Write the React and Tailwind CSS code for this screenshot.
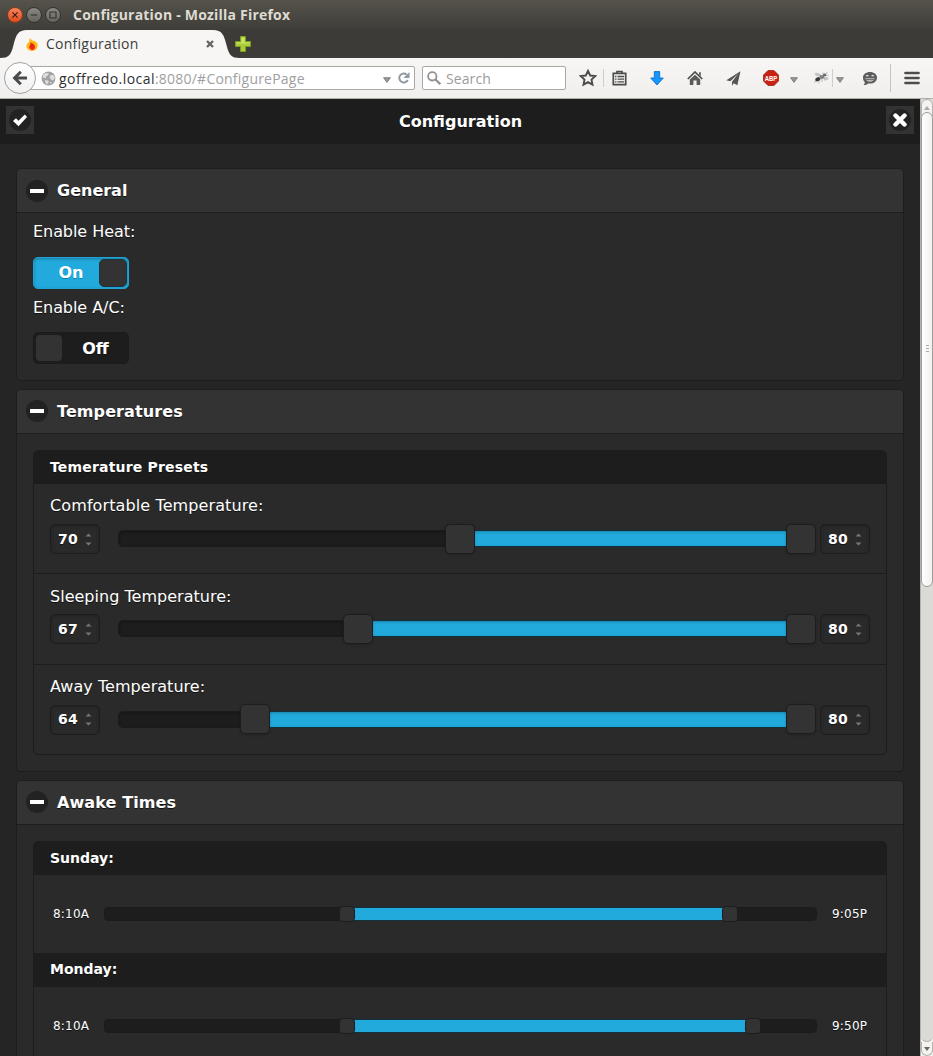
import React from "react";

const UI = "font-['Open_Sans','Noto_Sans',sans-serif]";

function WindowButton({ close, children }) {
  return (
    <span
      className={
        close
          ? "flex size-4 items-center justify-center rounded-full border border-[#8a3a1c] bg-linear-to-b from-[#f4845c] to-[#df4b1a]"
          : "flex size-4 items-center justify-center rounded-full border border-[#33322e] bg-linear-to-b from-[#8a8880] to-[#65635c]"
      }
    >
      <svg width="10" height="10" viewBox="0 0 10 10" fill="none" stroke={close ? "#3d1a0c" : "#33322e"} strokeWidth="1.1">
        {children}
      </svg>
    </span>
  );
}

function TitleBar() {
  return (
    <div className="flex h-[30px] items-center bg-linear-to-b from-[#55534b] to-[#3e3d39] pl-[7px]">
      <div className="flex gap-[3px]">
        <WindowButton close>
          <path d="M2.4 2.4l5.2 5.2M7.6 2.4L2.4 7.6" />
        </WindowButton>
        <WindowButton>
          <path d="M1.8 5h6.4" />
        </WindowButton>
        <WindowButton>
          <path d="M2 2h6v6H2z" />
        </WindowButton>
      </div>
      <span className={`${UI} ml-3 text-[14px] leading-5 font-bold tracking-[0.21px] whitespace-nowrap text-[#dfdbd2]`}>
        Configuration - Mozilla Firefox
      </span>
    </div>
  );
}

function TabBar() {
  return (
    <div className="flex h-7 items-center bg-[#3c3b37]">
      <div className="relative flex h-7 w-[235px] items-center pl-[25px]">
        <svg className="absolute top-0 left-0" width="240" height="28" viewBox="0 0 240 28">
          <path d="M0 28C9 28 11 25 13.500 15C16 5 18 0 27 0H213C222 0 224 5 226.500 15C229 25 231 28 240 28z" fill="#f7f6f5" />
        </svg>
        <svg className="relative" width="14" height="15" viewBox="0 0 14 15">
          <path d="M4.500 1C6.500 2.500 7 4 8.500 3.800C9.600 3.600 10 4.500 11.500 5.500C13.400 7 13 10 11.500 12C9.500 14.500 4.500 14.600 2.500 12C.8 10 1.200 7.500 3 6C4.500 4.800 4.700 3 4.500 1z" fill="#fdb813" />
          <path d="M5.500 5.500C7.500 6 10 7.500 10 10C10 12.500 7.500 13.500 5.800 12.500C4 11.500 3.800 9.500 4.800 8.500C5.600 7.600 5.600 6.600 5.500 5.500z" fill="#ee2415" />
        </svg>
        <span className={`${UI} relative ml-[7px] w-[159px] text-[14px] leading-5 tracking-[0.25px] text-[#3d3d3d]`}>Configuration</span>
        <svg className="relative" width="10" height="10" viewBox="0 0 10 10">
          <path d="M2 2l6 6M8 2L2 8" stroke="#666" strokeWidth="2.400" />
        </svg>
      </div>
      <svg width="16" height="16" viewBox="0 0 16 16">
        <path d="M5.500.500h5v5h5v5h-5v5h-5v-5h-5v-5h5z" fill="#a9cb3c" stroke="#7da01f" />
        <path d="M6.500 1.500h3v5h5v1h-13v-1h5z" fill="#cfe36c" />
      </svg>
    </div>
  );
}

function Triangle({ className }) {
  return (
    <svg className={className} width="8" height="6" viewBox="0 0 8 6">
      <path d="M.6.700h6.800L4 5.400z" fill="#999" stroke="#6d6d6d" strokeWidth=".8" />
    </svg>
  );
}

function Toolbar() {
  return (
    <div className="flex h-[41px] items-center border-b border-[#b1b0a6] bg-linear-to-b from-[#f7f6f5] to-[#f0efed]">
      <div className="relative z-10 ml-1 flex size-8 shrink-0 items-center justify-center rounded-full border border-[#a3a29e] bg-linear-to-b from-white to-[#f1f1f1]">
        <svg width="16" height="16" viewBox="0 0 16 16" fill="none" stroke="#4b4b4b" strokeWidth="3">
          <path d="M8.800 1.800L2.600 8l6.200 6.200M3 8h12" />
        </svg>
      </div>
      <div className="-ml-2 flex h-6 w-[387px] shrink-0 items-center rounded-r-[2px] border border-[#a9a8a3] bg-white pl-[12px]">
        <svg width="15" height="15" viewBox="0 0 15 15">
          <circle cx="7.500" cy="7.500" r="6.900" fill="#a2a2a2" />
          <path d="M2 4l3-2 3 .5-1 2-2 1-.5 2-2.500-1zM9.500 4l3 0 1.500 3-2 2.500-2-1-1.500-2.200zM4 9l3 .5 1 1.500-2 2.500-1.500-1.500zM9 11l2 0-1.500 2z" fill="#dedede" />
        </svg>
        <span className={`${UI} ml-[3px] w-[324px] pt-px text-[14px] leading-5 tracking-[0.22px] whitespace-nowrap text-[#a0a0a0]`}>
          <span className="tracking-[0.45px] text-[#303030]">goffredo.local</span>:8080/#ConfigurePage
        </span>
        <Triangle className="mt-[3px]" />
        <svg className="ml-[6px]" width="14" height="14" viewBox="0 0 14 14" fill="none">
          <path d="M9.800 3.600A4.500 4.500 0 1 0 10.800 9" stroke="#9098a1" strokeWidth="1.900" />
          <path d="M12.500 1v6H6.500z" fill="#9098a1" />
        </svg>
      </div>
      <div className="ml-[7px] flex h-6 w-36 shrink-0 items-center rounded-[2px] border border-[#a9a8a3] bg-white pl-[4px]">
        <svg width="14" height="14" viewBox="0 0 14 14" fill="none" stroke="#929292">
          <circle cx="5.300" cy="5.300" r="4.200" strokeWidth="1.800" />
          <path d="M8.500 8.500l4.800 4.700" strokeWidth="2.200" />
        </svg>
        <span className={`${UI} ml-[5px] pt-px text-[14px] leading-5 tracking-[0.1px] text-[#9b9b9b]`}>Search</span>
      </div>

      <svg className="ml-[13px] shrink-0" width="18" height="18" viewBox="0 0 18 18">
        <path d="M9 1.800l2.200 4.700 5 .6-3.700 3.500 1 5.100L9 13.200l-4.500 2.500 1-5.100L1.800 7.100l5-.6z" fill="none" stroke="#4c4c4c" strokeWidth="1.900" />
      </svg>
      <span className="ml-1.5 h-[18px] w-px shrink-0 bg-[#cfcecb]" />
      <svg className="ml-2 shrink-0" width="15" height="16" viewBox="0 0 15 16" fill="none" stroke="#4c4c4c">
        <path d="M1.300 3.300h12.400v11.400H1.300z" strokeWidth="1.700" />
        <path d="M5 3.300V1.500h5v1.800" strokeWidth="1.700" />
        <path d="M3 6.500h1.500M5.500 6.500H12M3 9.200h1.500M5.500 9.200H12M3 11.900h1.500M5.500 11.900H12" strokeWidth="1.300" />
      </svg>
      <svg className="ml-[23px] shrink-0" width="14" height="15" viewBox="0 0 14 15">
        <path d="M4.300.600h5.400v6.400h3.600L7 13.900.7 7h3.600z" fill="#1597ff" stroke="#0b6fc4" strokeWidth=".9" />
      </svg>
      <svg className="ml-[23px] shrink-0" width="16" height="15" viewBox="0 0 16 15">
        <path d="M.8 8L8 1l7.200 7" fill="none" stroke="#4c4c4c" strokeWidth="1.700" />
        <path d="M12 1.300h1.800v4L12 3.600zM2.800 8.600L8 3.800l5.200 4.800V14H9.600V9.500H6.400V14H2.800z" fill="#5b5b5b" />
      </svg>
      <svg className="ml-[23px] shrink-0" width="15" height="15" viewBox="0 0 15 15">
        <path d="M14.500.300L.3 9.200l4 1.100L12 3 6 10.800V14.700l1.700-2.400 3.600 1.900z" fill="#555" />
      </svg>
      <svg className="ml-[22px] shrink-0" width="16" height="16" viewBox="0 0 16 16">
        <path d="M5 .500h6L15.500 5v6L11 15.500H5L.5 11V5z" fill="#c72214" stroke="#9e2318" strokeWidth=".8" />
        <text x="8" y="10.800" textAnchor="middle" fontSize="7" fontWeight="bold" fill="#fff" fontFamily="Liberation Sans, sans-serif" textLength="12.500" lengthAdjust="spacingAndGlyphs">
          ABP
        </text>
      </svg>
      <Triangle className="mt-[3px] ml-[11px] shrink-0" />
      <svg className="ml-[15px] shrink-0" width="16" height="14" viewBox="0 0 16 14">
        <path d="M8.500 4.500C6 1 2.500 1.300 1.500 3c1 2 4 3.200 7 1.500zM10 6.500c2 3 4 3 5.500 1.500-.5-2-2-2.500-5.500-1.500z" fill="#c4c4c4" />
        <ellipse cx="4.800" cy="8.300" rx="2.700" ry="2" fill="#3a3a3a" transform="rotate(-25 4.800 8.300)" />
        <ellipse cx="8.800" cy="6" rx="2.500" ry="2" fill="#808080" />
        <ellipse cx="11.600" cy="4" rx="1.700" ry="1.400" fill="#6a6a6a" />
        <path d="M3 10l-2 1.500M6 10v2.500M9 8v3M11 7l1.500 3M10 4V1.500M13 3l1.500-2M13 4.500h2.500" stroke="#999" strokeWidth=".6" fill="none" />
      </svg>
      <span className="ml-[3px] h-[18px] w-px shrink-0 bg-[#cfcecb]" />
      <Triangle className="mt-[3px] ml-[3px] shrink-0" />
      <svg className="ml-[18px] shrink-0" width="16" height="15" viewBox="0 0 16 15">
        <path d="M8 1c4 0 7 2.300 7 5.700S12 12.600 8 12.600c-.7 0-1.400 0-2-.2C4.800 13.600 3.200 14 1.600 13.900 2.500 13 3 12 2.800 11 1.600 10 1 8.500 1 6.700 1 3.300 4 1 8 1z" fill="#5c5c5c" />
        <path d="M3.800 5.300c.4-1.600 2.600-1.600 3 0zM9.200 5.300c.4-1.600 2.600-1.600 3 0z" fill="#eee" />
        <path d="M3.300 7.300h9.400c-.4 2.200-2.400 3.400-4.700 3.400S3.700 9.500 3.300 7.300z" fill="#c4c4c4" />
        <path d="M3.600 8.600h8.800" stroke="#5c5c5c" strokeWidth=".9" />
      </svg>
      <span className="ml-3 h-7 w-px shrink-0 bg-[#c4c3c0]" />
      <svg className="ml-[13px] shrink-0" width="16" height="14" viewBox="0 0 16 14">
        <path d="M1.500 2h13M1.500 7h13M1.500 12h13" stroke="#4c4c4c" strokeWidth="2.700" strokeLinecap="round" />
      </svg>
    </div>
  );
}

function HeaderButton({ children }) {
  return (
    <button className="mb-[2px] flex size-7 items-center justify-center bg-[#333]">
      <span className="flex size-[22px] items-center justify-center rounded-full bg-[#222]">{children}</span>
    </button>
  );
}

function Section({ title, raised, children }) {
  return (
    <section className="rounded-[5px] border border-[#1d1d1d] bg-[#2a2a2a]">
      <h2 className="flex h-11 items-center rounded-t-[4px] border-b border-[#1d1d1d] bg-[#333] pl-[9px] text-[16px] font-bold">
        <span className={`${raised ? "mb-[2px]" : ""} mr-[9px] flex size-[22px] items-center justify-center rounded-full bg-[#222]`}>
          <span className="h-1 w-3.5 bg-white" />
        </span>
        <span className={raised ? "tracking-[0.1px]" : ""}>{title}</span>
      </h2>
      {children}
    </section>
  );
}

function Toggle({ on }) {
  return on ? (
    <div className="flex h-8 w-24 items-center rounded-[5px] border border-[#1fa3d6] bg-[#22aadd] pr-px shadow-[inset_0_1px_3px_rgba(0,0,0,0.3)]">
      <span className="flex-1 pl-[9px] text-center font-bold [text-shadow:0_1px_0_#0088bb]">On</span>
      <span className="size-7 rounded-[5px] border border-[#1d3540] bg-[#333]" />
    </div>
  ) : (
    <div className="flex h-8 w-24 items-center rounded-[5px] border border-[#1b1b1b] bg-[#1d1d1d] pl-px">
      <span className="size-7 rounded-[5px] border border-[#1d1d1d] bg-[#333]" />
      <span className="flex-1 pt-[2px] text-center font-bold">Off</span>
    </div>
  );
}

function NumberBox({ value, raised }) {
  return (
    <div
      className={`${raised ? "pb-[2px]" : ""} flex h-[30px] w-[50px] shrink-0 items-center rounded-[5px] border border-[#1d1d1d] bg-[#2a2a2a] pl-[7px] text-[14px] font-bold shadow-[inset_0_1px_3px_rgba(0,0,0,0.25)]`}
    >
      <span className="w-[27px] tracking-[0.2px]">{value}</span>
      <svg width="7" height="13" viewBox="0 0 7 13" fill="#777">
        <path d="M.5 3.500L3.500.5l3 3zM.5 9.500h6l-3 3z" />
      </svg>
    </div>
  );
}

const ROW_STYLES = {
  first: { row: "h-[90px] border-b border-[#1d1d1d] pt-[10px]", label: "h-[30px] tracking-[0.11px]", handle: "-top-[7px]" },
  middle: { row: "h-[91px] border-b border-[#1d1d1d] pt-[11px]", label: "h-[29px] tracking-[0.02px]", handle: "-top-[7px]" },
  last: { row: "h-[89px] pt-[10px]", label: "h-[30px] tracking-[0.04px]", handle: "-top-[8px]" },
};

function TemperatureRow({ label, low, high, handle, place }) {
  const style = ROW_STYLES[place];
  const raised = place === "last";
  return (
    <div className={`${style.row} px-4`}>
      <div className={`${style.label} leading-6`}>{label}</div>
      <div className="flex items-center">
        <NumberBox value={low} raised={raised} />
        <div className="relative mb-px ml-[18px] h-[17px] w-[683px] rounded-[5px] border border-[#1b1b1b] bg-[#1d1d1d] shadow-[inset_0_1px_3px_rgba(0,0,0,0.3)]">
          <div
            className="absolute -top-px right-0 h-[17px] border-y border-[#12303c] bg-[#22aadd] shadow-[inset_0_1px_3px_rgba(0,0,0,0.25)]"
            style={{ left: handle + 15 }}
          />
          <div
            className={`${style.handle} absolute size-[30px] rounded-[5px] border border-[#1d1d1d] bg-[#333] shadow-[0_1px_3px_rgba(0,0,0,0.2)]`}
            style={{ left: handle }}
          />
          <div
            className={`${style.handle} absolute left-[667px] size-[30px] rounded-[5px] border border-[#1d1d1d] bg-[#333] shadow-[0_1px_3px_rgba(0,0,0,0.2)]`}
          />
        </div>
        <div className="ml-[19px]">
          <NumberBox value={high} raised={raised} />
        </div>
      </div>
    </div>
  );
}

function Divider({ first, wide, children }) {
  return (
    <h3
      className={`${first ? "h-[33px] rounded-t-[4px]" : "h-[34px] pb-[2px]"} ${wide ? "tracking-[0.18px]" : ""} flex items-center bg-[#1d1d1d] px-4 text-[14px] font-bold`}
    >
      {children}
    </h3>
  );
}

function TimeRow({ start, end, from, to }) {
  return (
    <div className="flex h-[78px] items-center text-[12px] tracking-[0.2px]">
      <span className="w-[70px] pl-[19px]">{start}</span>
      <div className="relative h-3.5 w-[713px] rounded-[4px] border border-[#1b1b1b] bg-[#1d1d1d]">
        <div className="absolute -top-px h-3.5 border-y border-[#12303c] bg-[#22aadd]" style={{ left: from + 8, width: to - from }} />
        <div className="absolute -top-[2px] size-4 rounded-[4px] border border-[#1d1d1d] bg-[#333]" style={{ left: from }} />
        <div className="absolute -top-[2px] size-4 rounded-[4px] border border-[#1d1d1d] bg-[#333]" style={{ left: to }} />
      </div>
      <span className="ml-[15px]">{end}</span>
    </div>
  );
}

function Scrollbar() {
  return (
    <div className="flex w-[13px] flex-col border-l border-[#b5b2ad] bg-[#dcdad7]">
      <div className="-mb-1 flex h-[17px] items-center justify-center rounded-t-full border border-[#b5b2ad] bg-[#f4f3f2]">
        <svg width="6" height="4" viewBox="0 0 6 4">
          <path d="M0 4L3 0l3 4z" fill="#aaa" />
        </svg>
      </div>
      <div className="flex h-[475px] flex-col items-center justify-center gap-[2px] rounded-full border border-[#9f9c98] bg-linear-to-r from-white to-[#f1f0ef] pb-[2px]">
        <span className="h-px w-[3px] bg-[#aaa]" />
        <span className="h-px w-[3px] bg-[#aaa]" />
        <span className="h-px w-[3px] bg-[#aaa]" />
      </div>
      <div className="flex flex-1 flex-col bg-[#f4f3f2]">
        <div className="-mt-2 flex-1 rounded-b-full border-b border-[#b5b2ad] bg-[#dcdad7] [clip-path:inset(8px_0_0_0)]" />
        <div className="flex h-[14px] items-center justify-center rounded-b-full border-x border-b border-[#b5b2ad]">
          <svg width="6" height="4" viewBox="0 0 6 4">
            <path d="M0 0h6L3 4z" fill="#666" />
          </svg>
        </div>
      </div>
    </div>
  );
}

export default function App() {
  return (
    <div className="flex h-[1056px] w-[933px] flex-col overflow-hidden bg-[#252525]">
      <TitleBar />
      <TabBar />
      <Toolbar />
      <div className="flex min-h-0 flex-1">
        <main className="w-[920px] overflow-hidden bg-[#252525] font-['DejaVu_Sans',sans-serif] text-[16px] text-white [text-shadow:0_1px_0_#111]">
          <header className="flex h-[45px] items-center justify-between border-b border-[#1b1b1b] bg-[#1d1d1d] px-1.5">
            <HeaderButton>
              <svg width="14" height="14" viewBox="0 0 14 14">
                <path d="M14 4L11.800 1.500 5.500 7.800 3 5.300 0 8l5.500 5.200z" fill="#fff" />
              </svg>
            </HeaderButton>
            <h1 className="pt-[2px] pl-px font-bold">Configuration</h1>
            <HeaderButton>
              <svg width="14" height="14" viewBox="0 0 14 14">
                <path d="M2.500 2.500l9 9M11.500 2.500l-9 9" stroke="#fff" strokeWidth="4.400" strokeLinecap="round" />
              </svg>
            </HeaderButton>
          </header>

          <div className="flex flex-col gap-2 px-4 pt-6">
            <Section title="General">
              <div className="h-[167px] px-4 pt-[7px]">
                <div className="h-[37px] leading-6 tracking-[-0.06px]">Enable Heat:</div>
                <Toggle on />
                <div className="mt-[7px] h-[36px] leading-6 tracking-[-0.06px]">Enable A/C:</div>
                <Toggle />
              </div>
            </Section>

            <Section title="Temperatures" raised>
              <div className="px-4 py-4">
                <div className="rounded-[5px] border border-[#1d1d1d]">
                  <Divider first wide>
                    Temerature Presets
                  </Divider>
                  <TemperatureRow label="Comfortable Temperature:" low="70" high="80" handle={326} place="first" />
                  <TemperatureRow label="Sleeping Temperature:" low="67" high="80" handle={224} place="middle" />
                  <TemperatureRow label="Away Temperature:" low="64" high="80" handle={121} place="last" />
                </div>
              </div>
            </Section>

            <Section title="Awake Times" raised>
              <div className="px-4 py-4">
                <div className="rounded-[5px] border border-[#1d1d1d]">
                  <Divider first>Sunday:</Divider>
                  <TimeRow start="8:10A" end="9:05P" from={234} to={617} />
                  <Divider>Monday:</Divider>
                  <TimeRow start="8:10A" end="9:50P" from={234} to={640} />
                </div>
              </div>
            </Section>
          </div>
        </main>
        <Scrollbar />
      </div>
    </div>
  );
}
